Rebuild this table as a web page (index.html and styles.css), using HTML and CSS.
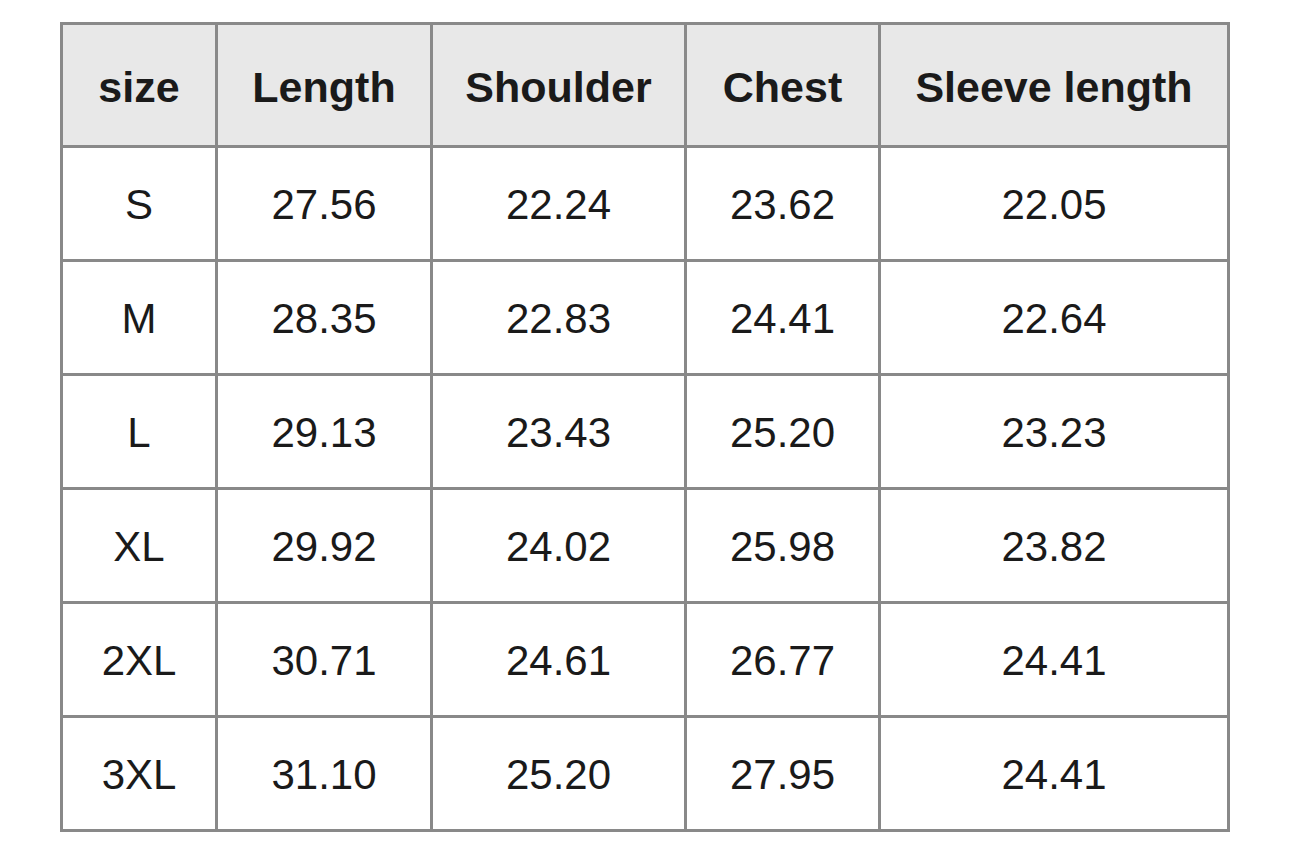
FILE: index.html
```html
<!DOCTYPE html>
<html>
<head>
<meta charset="utf-8">
<link rel="stylesheet" href="styles.css">
</head>
<body>
<div class="chart">
  <div class="cell head">size</div>
  <div class="cell head">Length</div>
  <div class="cell head">Shoulder</div>
  <div class="cell head">Chest</div>
  <div class="cell head">Sleeve length</div>

  <div class="cell">S</div><div class="cell">27.56</div><div class="cell">22.24</div><div class="cell">23.62</div><div class="cell">22.05</div>
  <div class="cell">M</div><div class="cell">28.35</div><div class="cell">22.83</div><div class="cell">24.41</div><div class="cell">22.64</div>
  <div class="cell">L</div><div class="cell">29.13</div><div class="cell">23.43</div><div class="cell">25.20</div><div class="cell">23.23</div>
  <div class="cell">XL</div><div class="cell">29.92</div><div class="cell">24.02</div><div class="cell">25.98</div><div class="cell">23.82</div>
  <div class="cell">2XL</div><div class="cell">30.71</div><div class="cell">24.61</div><div class="cell">26.77</div><div class="cell">24.41</div>
  <div class="cell">3XL</div><div class="cell">31.10</div><div class="cell">25.20</div><div class="cell">27.95</div><div class="cell">24.41</div>
</div>
</body>
</html>
```

FILE: styles.css
```css
html, body {
  margin: 0;
  padding: 0;
  background: #ffffff;
}

body {
  padding: 22px 0 0 60px;
  font-family: "Liberation Sans", Arial, sans-serif;
  color: #1a1a1a;
}

.chart {
  display: inline-grid;
  grid-template-columns: 152px 212px 251px 191px 346px;
  grid-template-rows: 120px repeat(6, 111px);
  gap: 3px;
  padding: 3px;
  background: #898989;
}

.cell {
  background: #ffffff;
  display: flex;
  align-items: center;
  justify-content: center;
  font-size: 42px;
  padding-top: 3px;
}

.cell.head {
  background: #e8e8e8;
  font-weight: bold;
  font-size: 43px;
  padding-top: 4px;
}
```
